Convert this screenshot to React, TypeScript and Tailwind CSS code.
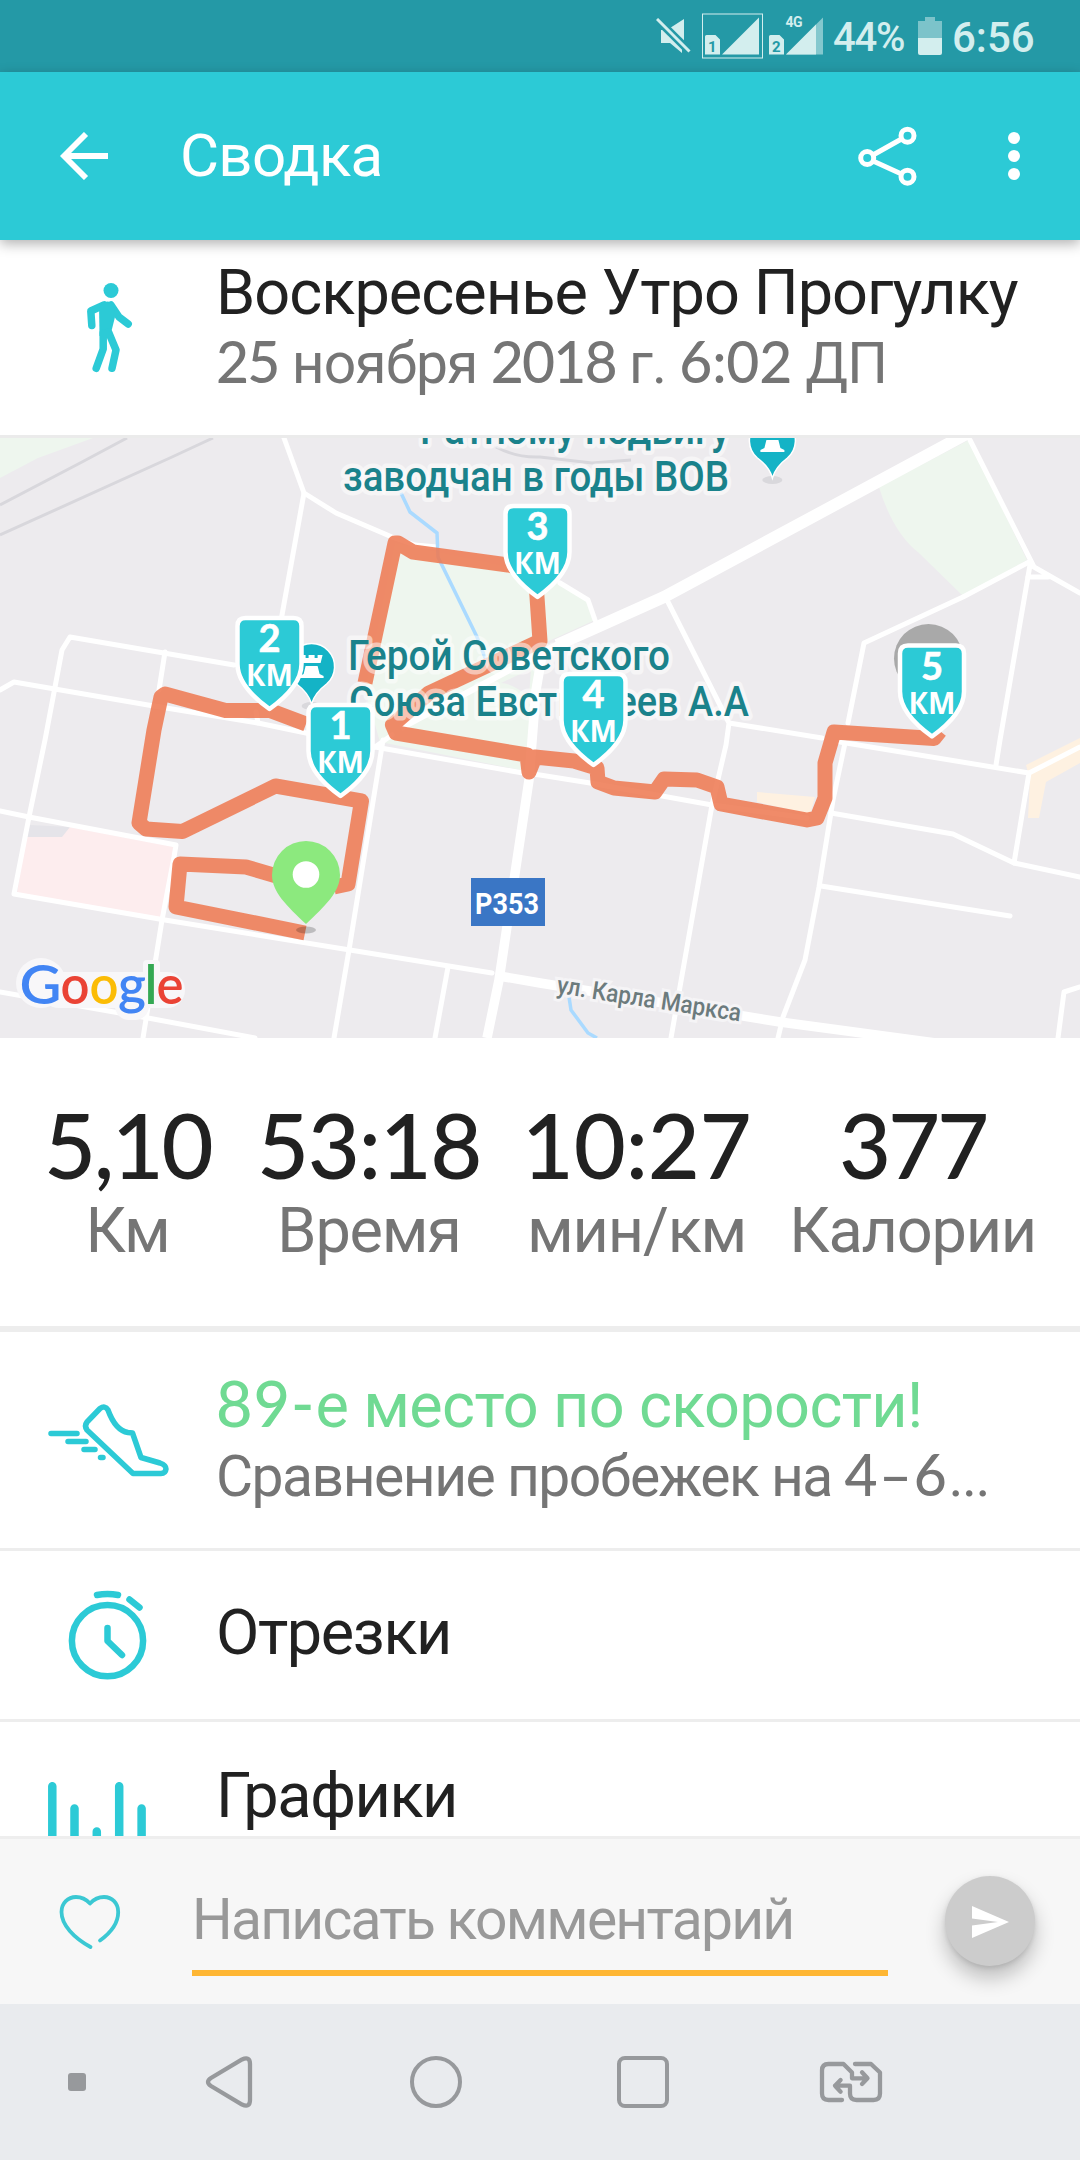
import type { ReactNode } from 'react'

const STATS = [
  { value: '5,10', label: 'Км', tracking: 'tracking-[-2.5px]', shift: '' },
  { value: '53:18', label: 'Время', tracking: 'tracking-[-1.5px]', shift: 'pl-[8px]' },
  { value: '10:27', label: 'мин/км', tracking: 'tracking-[-0.4px]', shift: 'pl-[3px]' },
  { value: '377', label: 'Калории', tracking: 'tracking-[-3.2px]', shift: '' },
]

const KM_MARKERS = [
  { n: 3, x: 537.5, y: 504 },
  { n: 2, x: 269.5, y: 616 },
  { n: 1, x: 340.5, y: 703 },
  { n: 4, x: 593.5, y: 672 },
  { n: 5, x: 932, y: 643.5 },
]

const ROADS = [
  'M284 438 304 493 282 615 278 640',
  'M304 493 336 513 392 537 415 545 437 547',
  'M0 690 14 682 148 705 258 723 306 733 375 747 523 773 540 775 590 783 712 805 807 818',
  'M234 665 70 637 62 650 45 740 29 817 14 894 165 920 350 950 492 973',
  'M165 652 159 690',
  'M258 723 256 712',
  'M0 811 29 817 176 845 174 857 162 920 143 1038',
  'M0 992 148 1018 255 1038',
  'M392 735 375 747M383 740 349 950 334 1038',
  'M448 967 435 1038',
  'M667 600 729 723 822 738M729 723 726 745 712 805 671 1038',
  'M970 440 1034 567 1048 575 1080 593M1028 577 1048 577',
  'M1029 562 963 597 864 643 848 723',
  'M1030 565 1000 740 996 765',
  'M840 742 1029 773 1080 747M1029 773 1014 863',
  'M831 813 953 834 1014 863 1080 877',
  'M845 743 833 800 819 887 805 960 783 1017 778 1038',
  'M821 886 1010 916',
  'M1080 987 1064 992 1058 1038',
  'M560 583 588 600 595 620',
]

const ROUTE =
  'M305 933 176 907 180 864 246 867 280 877M334 887 348 884 361.5 801 275.5 786 182.5 831.5 146 829 139 823 154 730 161 697 165 694 225.5 710.5 270 710.5 306 724M365 683 395 543 398 543 413 552 508 565 535 570 537 597 540 641 429 693 392.5 725 396 733 527 755 529 772 535 757 574 761 597 768 598 782 614 788 655 792 664 779 697 780 717 787 721 804 807 820 817 818 825 798 825 763 834 732 934 738.5 940 731'

function Num({ children, className = 'tracking-[-1.8px]' }: { children: ReactNode; className?: string }) {
  return <span className={`font-['Lato'] leading-none ${className}`}>{children}</span>
}

function StatusBar() {
  return (
    <div className="flex h-[72px] shrink-0 items-center bg-[#2499a6] pl-[656px] text-[#d3eeee]">
      <svg className="h-9 w-[35px]" viewBox="656 18 35 36" fill="currentColor">
        <path d="M684 19v23L670 28zM661 30h6l15 17v6L670 43h-9z" />
        <path d="M657 19 690 52" stroke="#2499a6" strokeWidth="8" />
        <path d="M657 19 689.500 51.500" stroke="currentColor" strokeWidth="3" />
      </svg>
      <svg className="ml-[11px] h-[46px] w-[62px]" viewBox="702 12.500 62 46" fill="currentColor">
        <rect x="702.500" y="13.500" width="60" height="44" fill="none" stroke="currentColor" />
        <path d="M722 54h37V17zM705 36q0-1.500 1.500-1.500h9l4.500 4.500v15h-15z" />
        <text x="708" y="51.500" fontSize="15" fontWeight="700" fill="#2499a6" className="font-['Roboto']">1</text>
      </svg>
      <svg className="ml-[5px] h-[46px] w-[55px]" viewBox="769 12.500 55 46" fill="currentColor">
        <path d="M786 54h37V17z" opacity=".55" />
        <path d="M786 54h30V24zM769 36q0-1.500 1.500-1.500h9l4.500 4.500v15h-15z" />
        <text x="772" y="51.500" fontSize="15" fontWeight="700" fill="#2499a6" className="font-['Roboto']">2</text>
        <text x="785.500" y="26" fontSize="14" fontWeight="700" textLength="17" className="font-['Roboto']">4G</text>
      </svg>
      <span className="ml-[9px] w-[73px] whitespace-nowrap pt-[3px] font-['Roboto'] text-[40px] font-medium leading-[74px] tracking-[-1.2px]">44%</span>
      <svg className="ml-[12px] h-[38px] w-6" viewBox="919 17 24 38" fill="currentColor">
        <path d="M926 17h10v4h7v17h-24V21h7z" opacity=".5" />
        <path d="M919 38h24v15q0 2-2 2h-20q-2 0-2-2z" />
      </svg>
      <span className="ml-[10px] whitespace-nowrap pt-[3px] font-['Roboto'] text-[42px] font-medium leading-[74px]">6:56</span>
    </div>
  )
}

function AppBar() {
  return (
    <div className="z-10 flex h-[168px] shrink-0 items-center bg-[#2ccad6] pl-[60px] text-white shadow-[0_4px_12px_rgba(0,0,0,0.3)]">
      <svg className="h-12 w-12" viewBox="0 0 48 48" fill="none" stroke="white" strokeWidth="5.800">
        <path d="M26 2 4 24 26 46M4 24H48" />
      </svg>
      <h1 className="ml-[72px] w-[200px] whitespace-nowrap text-[60px] leading-[168px] tracking-[-0.7px]">Сводка</h1>
      <svg className="ml-[477px] h-[62px] w-[62px]" viewBox="857 125 62 62" fill="none" stroke="white" strokeWidth="5">
        <circle cx="907.500" cy="135.700" r="6.500" />
        <circle cx="867.200" cy="158" r="6.500" />
        <circle cx="907.500" cy="176.700" r="6.500" />
        <path d="M901.500 139 873 155M901.500 174 873 161" />
      </svg>
      <svg className="ml-[89px] h-12 w-3" viewBox="0 0 12 48" fill="white">
        <circle cx="6" cy="6" r="6" />
        <circle cx="6" cy="24" r="6" />
        <circle cx="6" cy="42" r="6" />
      </svg>
    </div>
  )
}

function KmMarker({ n, x, y }: { n: number; x: number; y: number }) {
  return (
    <g transform={`translate(${x} ${y})`}>
      <path
        d="M-24 2h48q8 0 8 8v38Q32 70 0 93Q-32 70-32 48V10q0-8 8-8z"
        fill="#2ccad6"
        stroke="white"
        strokeWidth="4.500"
        strokeLinejoin="round"
      />
      <text x="0" y="36" textAnchor="middle" fontSize="38" fontWeight="700" fill="white" stroke="white" strokeWidth=".6" className="font-['Lato']">{n}</text>
      <text x="-23.500" y="70" textLength="47" lengthAdjust="spacingAndGlyphs" fontSize="30" fontWeight="700" fill="white" className="font-['Open_Sans']">
        КМ
      </text>
    </g>
  )
}

function PoiPin({ x, y }: { x: number; y: number }) {
  return (
    <g transform={`translate(${x} ${y})`}>
      <ellipse cx="0" cy="39" rx="10" ry="4" fill="#d9d8dc" />
      <path d="M0 37Q-3 26-15 17A23 23 0 1 1 15 17Q3 26 0 37z" fill="#14b3c6" stroke="white" strokeWidth="1.500" />
      <path d="M-11-12h5v3h3v-3h6v3h3v-3h5l-2 8H-9zM-6-1H6l2 8 4 2v2h-24v-2l4-2z" fill="white" />
    </g>
  )
}

// white outline behind the glyphs keeps labels readable over roads
function MapLabel({ x, y, width, children }: { x: number; y: number; width: number; children: string }) {
  return (
    <text
      x={x}
      y={y}
      textLength={width}
      lengthAdjust="spacingAndGlyphs"
      fontSize="42"
      fontWeight="500"
      fill="#1a828b"
      stroke="rgba(255,255,255,0.5)"
      strokeWidth="9"
      strokeLinejoin="round"
      paintOrder="stroke"
      className="font-['Roboto']"
    >
      {children}
    </text>
  )
}

const GOOGLE = [
  { c: 'G', x: 19.5, w: 42, fill: '#4285f4' },
  { c: 'o', x: 60.5, w: 29, fill: '#ea4335' },
  { c: 'o', x: 89.5, w: 29, fill: '#fbbc05' },
  { c: 'g', x: 118, w: 28, fill: '#4285f4' },
  { c: 'l', x: 144.5, w: 13, fill: '#34a853' },
  { c: 'e', x: 156.5, w: 27, fill: '#ea4335' },
]

function RouteMap() {
  return (
    <svg className="block h-[600px] w-[1080px] shrink-0" viewBox="0 438 1080 600">
      <rect x="0" y="438" width="1080" height="600" fill="#edebee" />
      <g fill="#eef6ee">
        <path d="M0 438H93L38 458 0 478z" />
        <path d="M879 487 969 440 1027 560 963 596 919 553Q893 533 879 487z" />
        <path d="M395 543 508 567 560 583 588 600 595 620 540 645 536 690 530 772 380 742 365 690z" />
      </g>
      <path d="M501 683 531 669 529 697Q512 683 501 683z" fill="#edebee" />
      <path d="M30 825 70 827 64 838 26 837z" fill="#e5e4e9" />
      <path d="M26 837H62L70 827 175 847 162 918 17 893z" fill="#fdedee" />
      <path d="M757 792 815 797 810 814 757 802zM1026 765 1080 738V763L1046 782 1039 818H1028L1030 780z" fill="#fef1e1" />
      <g fill="none" stroke="#d8d7dc" strokeWidth="3">
        <path d="M0 505 82 462 127 438M0 535 172 457 213 438" />
        <path d="M496 447Q517 458 540 457L592 463 631 460" />
      </g>
      <g fill="none" stroke="white" strokeWidth="5" strokeLinecap="round" strokeLinejoin="round">
        {ROADS.map(d => <path key={d} d={d} />)}
      </g>
      <g fill="none" stroke="white" strokeLinejoin="round">
        <path d="M970 432 664 597 557 645" strokeWidth="12" />
        <path d="M560 643 401 728" strokeWidth="6" />
        <path d="M543 650 536 690 529 780 499 980 487 1038" strokeWidth="9.500" />
        <path d="M499 976 540 983 780 1022 936 1043" strokeWidth="9.500" />
      </g>
      <path
        d="M401 493 410 512 437 533 438 557 477 637 486 660M569 997 571 1010 588 1033 597 1038"
        fill="none"
        stroke="#aadaff"
        strokeWidth="3.500"
      />
      <path d={ROUTE} fill="none" stroke="#ee7a53" strokeOpacity=".87" strokeWidth="15" strokeLinejoin="round" />

      <PoiPin x={772.4} y={441} />
      <PoiPin x={311.6} y={667} />
      <MapLabel x={420} y={444} width={310}>Ратному подвигу</MapLabel>
      <MapLabel x={343} y={490.5} width={386}>заводчан в годы ВОВ</MapLabel>
      <MapLabel x={348} y={670} width={322}>Герой Советского</MapLabel>
      <MapLabel x={349} y={716} width={400}>Союза Евстигнеев А.А</MapLabel>

      <rect x="471" y="878" width="74" height="48" fill="#3a76c5" />
      <text x="475" y="914" textLength="64" lengthAdjust="spacingAndGlyphs" fontSize="30" fontWeight="700" fill="white" className="font-['Roboto']">
        P353
      </text>
      <text
        transform="translate(556 993) rotate(8.800)"
        textLength="186"
        lengthAdjust="spacingAndGlyphs"
        fontSize="25"
        fontWeight="500"
        fill="#6c7b7d"
        stroke="#f5f4f6"
        strokeWidth="6"
        paintOrder="stroke"
        className="font-['Roboto']"
      >
        ул. Карла Маркса
      </text>

      <circle cx="928.500" cy="658.500" r="34.500" fill="#a9a9a9" />
      {KM_MARKERS.map(m => <KmMarker key={m.n} {...m} />)}

      <ellipse cx="306" cy="930" rx="10" ry="3.500" fill="#000" opacity=".2" />
      <path d="M306 841A34 34 0 0 1 340 875C340 892 325 906 306 924C287 906 272 892 272 875A34 34 0 0 1 306 841z" fill="#8ce97e" />
      <circle cx="306" cy="874.500" r="13.300" fill="white" />

      {/* halo under the logo */}
      <g fill="#f8f7f9">
        <circle cx="41" cy="983" r="25" />
        <rect x="41" y="972" width="144" height="36" rx="18" />
        <rect x="143" y="960" width="17" height="48" rx="4" />
        <rect x="115" y="980" width="34" height="40" rx="14" />
      </g>
      <g fontSize="54" fontWeight="600" className="font-['Lato']">
        {GOOGLE.map(l => (
          <text key={l.x} x={l.x} y="1004" textLength={l.w} lengthAdjust="spacingAndGlyphs" fill={l.fill}>{l.c}</text>
        ))}
      </g>
    </svg>
  )
}

function ShoeIcon() {
  return (
    <svg className="ml-[48px] h-[80px] w-[121px]" viewBox="48 1400 121 80" fill="none" stroke="#2ccad6" strokeWidth="5.500" strokeLinecap="round" strokeLinejoin="round">
      <path d="M100 1408.500Q105 1405 108 1410C112 1421 119 1431 128 1432.500L132.500 1433 141 1457.500 160 1463Q166 1465 166 1469Q165.500 1473.500 161 1473.500H133L87 1430Q84 1426 87 1422z" />
      <path d="M51 1433.500H77M68 1441.500H86M84 1449.500H95M100.500 1457.500H103" />
    </svg>
  )
}

function StopwatchIcon() {
  return (
    <svg className="ml-[66px] h-[94px] w-[84px]" viewBox="66 1588 84 94" fill="none" stroke="#2ccad6" strokeWidth="6.500" strokeLinecap="round" strokeLinejoin="round">
      <circle cx="107.500" cy="1640.700" r="35.600" />
      <path d="M97 1595Q107.500 1593 118 1595M129.500 1599.500 139.500 1607.500M107.500 1628V1641L122 1655" />
    </svg>
  )
}

function ChartIcon() {
  return (
    <svg className="ml-[48px] h-[54px] w-[98px]" viewBox="48 1782 98 54" fill="none" stroke="#2ccad6" strokeWidth="8.500" strokeLinecap="round">
      <path d="M52.300 1786.200V1850M74.500 1808.500V1850M96.800 1831.500V1850M119.200 1786.200V1850M141.600 1808.500V1850" />
    </svg>
  )
}

function CommentBar() {
  return (
    <div className="flex h-[168px] shrink-0 border-t-[3px] border-[#eee] bg-[#f7f7f7]">
      <svg className="ml-[59px] mt-[55px] h-[58px] w-[62px]" viewBox="59 1894 62 58" fill="none" stroke="#3bc8d3" strokeWidth="3.800" strokeLinecap="round" strokeLinejoin="round">
        <path d="M90.500 1947C74 1938 61.500 1925 61.500 1912C61.500 1903 68 1897 76 1897Q84 1897 90 1903.500Q96 1897 104 1897C112 1897 118.200 1903 118.200 1912C118.200 1924 109 1934 100 1940.500" />
      </svg>
      <div className="ml-[71px] h-[137px] w-[696px] border-b-[6px] border-[#feb633]">
        <p className="whitespace-nowrap pt-[44px] text-[57px] leading-[74px] tracking-[-1.75px] text-[#999]">Написать комментарий</p>
      </div>
      <button className="ml-[57px] mt-[37px] flex size-[90px] items-center justify-center rounded-full bg-[#ccc] shadow-[0_12px_20px_rgba(0,0,0,0.24),0_2px_5px_rgba(0,0,0,0.1)]">
        <svg className="mt-px h-8 w-[37px]" viewBox="0 0 37 32" fill="white">
          <path d="M0 0 37 16 0 32V19.500L26 16 0 12.500z" />
        </svg>
      </button>
    </div>
  )
}

function NavBar() {
  return (
    <div className="flex h-[156px] shrink-0 items-center bg-[#e9ebee] text-[#97999c]">
      <div className="ml-[68px] size-[18px] rounded-[3px] bg-[#97999c]" />
      <svg className="ml-[119px] h-14 w-[50px]" viewBox="205 2054 50 56" fill="none" stroke="currentColor" strokeWidth="4.300">
        <path d="M242 2059.500Q250 2056 250 2064V2100Q250 2108 242 2104.500L211 2086Q205 2082 211 2078z" />
      </svg>
      <div className="ml-[155px] size-[52px] rounded-full border-[4.300px] border-[#97999c]" />
      <div className="ml-[155px] size-[52px] rounded-lg border-[4.300px] border-[#97999c]" />
      <svg className="ml-[149px] h-[44px] w-[66px]" viewBox="818 2060 66 44" fill="none" stroke="currentColor" strokeWidth="4.300" strokeLinecap="round" strokeLinejoin="round">
        <path d="M842 2100H828.500Q822 2100 822 2093.500V2070.500Q822 2064 828.500 2064H843.500L852 2072.500V2078.300H867M862 2072.300 867.500 2078.300 862 2084" />
        <path d="M855 2064H871L880 2072.500V2093.500Q880 2100 873.500 2100H856.500Q850 2100 850 2093.500V2085.700H835M840.600 2080 835 2085.700 840.600 2091.700" />
      </svg>
    </div>
  )
}

export default function App() {
  return (
    <div className="flex h-[2160px] w-[1080px] flex-col overflow-hidden bg-white font-['Roboto',sans-serif] text-[#212121]">
      <StatusBar />
      <AppBar />

      <div className="flex h-[198px] shrink-0 border-b-[3px] border-[#ebebeb]">
        <svg className="ml-[84px] mt-[41px] h-[94px] w-[51px]" viewBox="84 281 51 94" fill="none" stroke="#2ccad6" strokeWidth="7.500" strokeLinecap="round" strokeLinejoin="round">
          <circle cx="111" cy="290.500" r="7.500" fill="#2ccad6" stroke="none" />
          <path d="M91.800 325.500 90.800 311 104 305M111 305 119 317 128.200 324" />
          <path d="M99 305Q106 299 113.500 303L115 317 112 329 108 338 99.500 336z" fill="#2ccad6" stroke="none" />
          <path d="M103.200 333V349L96.200 368.300M108.500 332 116 350 112 368.300" />
        </svg>
        <div className="ml-[81px] whitespace-nowrap pt-[17px]">
          <h2 className="text-[63px] leading-[72px] tracking-[-0.95px]">Воскресенье Утро Прогулку</h2>
          <p className="pt-px text-[57px] leading-[68px] tracking-[-0.9px] text-[#757575]">
            <Num className="font-medium tracking-[-1.8px]">25</Num> ноября <Num className="font-medium tracking-[-1.8px]">2018</Num> г. <Num className="font-medium tracking-[-0.2px]">6:02</Num> ДП
          </p>
        </div>
      </div>

      <RouteMap />

      <div className="flex h-[294px] shrink-0 justify-between border-b-[6px] border-[#ededed] px-[44px] pt-[58px]">
        {STATS.map(s => (
          <div key={s.label} className={`flex flex-col items-center whitespace-nowrap ${s.shift}`}>
            <span className={`font-['Lato'] text-[90px] font-medium leading-[96px] ${s.tracking}`}>{s.value}</span>
            <span className="pt-px text-[63px] leading-[76px] tracking-[-1.2px] text-[#757575]">{s.label}</span>
          </div>
        ))}
      </div>

      <div className="flex h-[219px] shrink-0 border-b-[3px] border-[#ededed]">
        <div className="w-[216px] shrink-0 pt-[68px]"><ShoeIcon /></div>
        <div className="whitespace-nowrap pt-[38px]">
          <p className="text-[63px] leading-[72px] tracking-[-0.65px] text-[#70da93]"><Num className="font-medium tracking-[1px]">89-</Num>е место по скорости!</p>
          <p className="pt-px text-[57px] leading-[68px] tracking-[-1.5px] text-[#757575]">Сравнение пробежек на <Num className="font-medium tracking-[1.6px]">4–6</Num>...</p>
        </div>
      </div>

      <div className="flex h-[171px] shrink-0 border-b-[3px] border-[#ededed]">
        <div className="w-[216px] shrink-0 pt-[37px]"><StopwatchIcon /></div>
        <p className="pt-[46px] text-[63px] leading-[72px] tracking-[-1.4px]">Отрезки</p>
      </div>

      <div className="flex h-[114px] shrink-0 overflow-hidden">
        <div className="w-[216px] shrink-0 pt-[60px]"><ChartIcon /></div>
        <p className="pt-[38px] text-[63px] leading-[72px] tracking-[-1.4px]">Графики</p>
      </div>

      <CommentBar />
      <NavBar />
    </div>
  )
}
